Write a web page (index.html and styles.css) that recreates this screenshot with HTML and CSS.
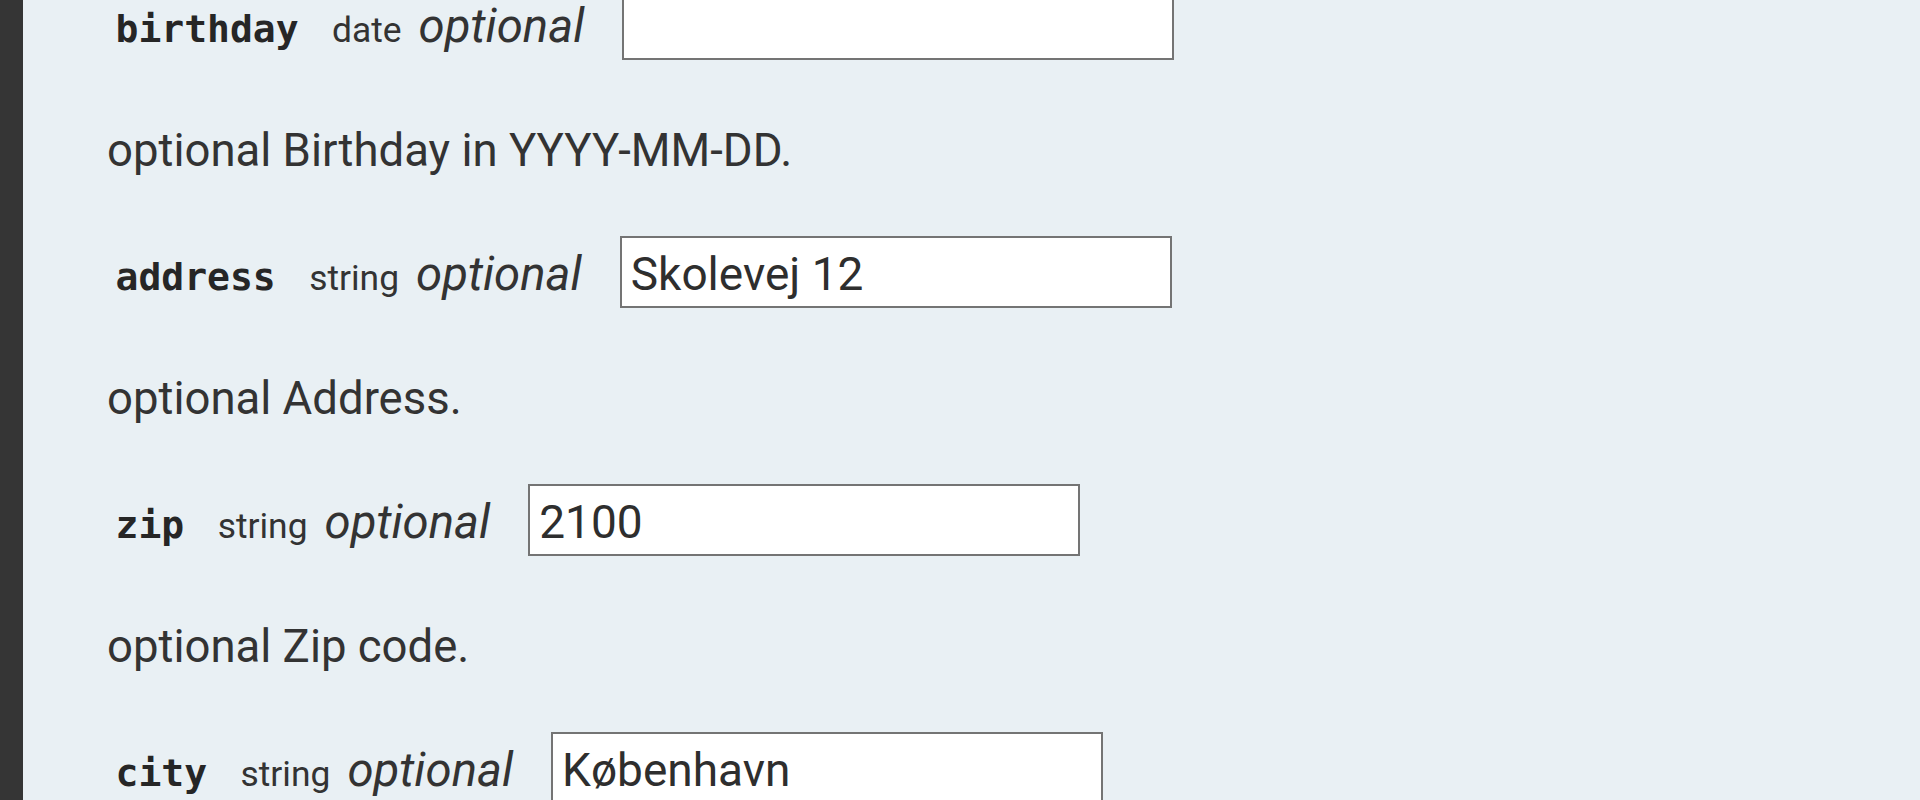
FILE: index.html
```html
<!DOCTYPE html>
<html lang="en">
<head>
<meta charset="utf-8">
<title>Form fields</title>
<link rel="stylesheet" href="styles.css">
</head>
<body>
<div class="layout">
  <aside class="sidebar"></aside>
  <main class="content">
    <div class="fields">
      <div class="field">
        <div class="row">
          <code class="name">birthday</code>
          <span class="type">date</span>
          <em class="opt">optional</em>
          <input class="input" type="text" value="">
        </div>
        <p class="desc">optional Birthday in YYYY-MM-DD.</p>
      </div>
      <div class="field">
        <div class="row">
          <code class="name">address</code>
          <span class="type">string</span>
          <em class="opt">optional</em>
          <input class="input" type="text" value="Skolevej 12">
        </div>
        <p class="desc">optional Address.</p>
      </div>
      <div class="field">
        <div class="row">
          <code class="name">zip</code>
          <span class="type">string</span>
          <em class="opt">optional</em>
          <input class="input" type="text" value="2100">
        </div>
        <p class="desc">optional Zip code.</p>
      </div>
      <div class="field">
        <div class="row">
          <code class="name">city</code>
          <span class="type">string</span>
          <em class="opt">optional</em>
          <input class="input" type="text" value="København">
        </div>
      </div>
    </div>
  </main>
</div>
</body>
</html>
```
FILE: styles.css
```css
html, body {
  margin: 0;
  padding: 0;
  height: 100%;
  overflow: hidden;
}
body {
  background: #e9f0f4;
  color: #333;
  font-family: Roboto, "Liberation Sans", sans-serif;
}
.layout {
  display: flex;
  min-height: 100%;
}
.sidebar {
  width: 23px;
  flex: 0 0 23px;
  background: #353535;
}
.content {
  flex: 1;
  padding-left: 84px;
  background: #e9f0f4;
}
.fields {
  margin-top: -12px;
}
.row {
  display: flex;
  align-items: baseline;
  height: 72px;
  padding-left: 8.5px;
}
.name {
  font-family: "DejaVu Sans Mono", "Liberation Mono", monospace;
  font-weight: bold;
  font-size: 38px;
  color: #262626;
}
.type {
  margin-left: 33.5px;
  font-size: 35.4px;
  color: #333;
}
.opt {
  margin-left: 17px;
  font-size: 47.3px;
  font-style: italic;
  color: #333;
}
.input {
  margin-left: 38px;
  box-sizing: border-box;
  width: 552px;
  height: 72px;
  padding: 4px 9px 0;
  border: 2px solid #747474;
  border-radius: 0;
  background: #fff;
  font-family: Roboto, "Liberation Sans", sans-serif;
  font-size: 46px;
  color: #2e2e2e;
  outline: none;
}
.desc {
  margin: 61px 0 55px;
  font-size: 45.5px;
  line-height: 60px;
  color: #333;
}
```
